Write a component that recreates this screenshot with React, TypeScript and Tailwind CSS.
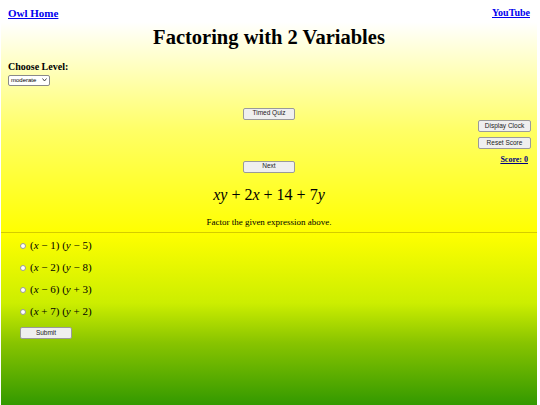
import React, { useState } from 'react';

const serif = { fontFamily: '"Liberation Serif", "Times New Roman", serif' };
const sans = { fontFamily: '"Liberation Sans", Arial, sans-serif' };

function MathVar({ children }: { children: React.ReactNode }) {
  return <span className="italic">{children}</span>;
}

function Factor({ a, b }: { a: string; b: string }) {
  return (
    <span style={serif} className="text-[11px] text-black">
      (<MathVar>x</MathVar> {a}) (<MathVar>y</MathVar> {b})
    </span>
  );
}

function SmallButton({ label, className = '' }: { label: string; className?: string }) {
  return (
    <button
      style={sans}
      className={`h-[12px] bg-[#efefef] border border-[#9a9a9a] rounded-[2px] text-[6.5px] leading-none text-[#222] ${className}`}
    >
      {label}
    </button>
  );
}

const choices = [
  { a: '− 1', b: '− 5' },
  { a: '− 2', b: '− 8' },
  { a: '− 6', b: '+ 3' },
  { a: '+ 7', b: '+ 2' },
];

export default function App() {
  const [picked, setPicked] = useState<number | null>(null);

  return (
    <div className="w-[540px] h-[405px] overflow-hidden bg-white pl-[1px] pr-[3px]" style={serif}>
      <div className="h-[405px] flex flex-col">
        {/* top section */}
        <div className="relative h-[233px] bg-[linear-gradient(to_bottom,#ffffff_0px,#ffffff_22px,#ffff66_130px,#ffff00_233px)]">
          <div className="flex justify-between px-[7px] pt-[8px]">
            <a href="#" className="text-[11px] font-bold text-[#0000ee] underline leading-none">
              Owl Home
            </a>
            <a href="#" className="text-[10px] font-bold text-[#0000ee] underline leading-none">
              YouTube
            </a>
          </div>
          <h1 className="text-center text-[20.5px] font-bold text-black leading-none mt-[8px]">
            Factoring with 2 Variables
          </h1>
          <div className="px-[7px] mt-[14px]">
            <div className="text-[10px] font-bold text-black leading-none">Choose Level:</div>
            <div
              style={sans}
              className="mt-[3px] w-[42px] h-[11px] bg-white border border-[#8a8a8a] rounded-[2px] flex items-center justify-between px-[2px] text-[6px] text-black"
            >
              <span>moderate</span>
              <svg width="5" height="4" viewBox="0 0 10 8">
                <path d="M1 1 L5 6 L9 1" stroke="#333" strokeWidth="1.8" fill="none" />
              </svg>
            </div>
          </div>
          <div className="flex justify-center mt-[22px]">
            <SmallButton label="Timed Quiz" className="w-[52px]" />
          </div>
          <div className="absolute right-[6px] top-[120px] flex flex-col items-end gap-[5px]">
            <SmallButton label="Display Clock" className="w-[53px]" />
            <SmallButton label="Reset Score" className="w-[53px]" />
            <a href="#" className="mt-[2px] mr-[3px] text-[8px] font-bold text-[#000080] underline leading-none">
              Score: 0
            </a>
          </div>
          <div className="flex justify-center mt-[41px]">
            <SmallButton label="Next" className="w-[52px]" />
          </div>
          <div className="text-center text-[16px] text-black leading-none mt-[14px]">
            <MathVar>xy</MathVar> + 2<MathVar>x</MathVar> + 14 + 7<MathVar>y</MathVar>
          </div>
          <p className="text-center text-[9px] text-black leading-none mt-[15px]">
            Factor the given expression above.
          </p>
          <div className="absolute left-0 right-0 bottom-0 h-[1px] bg-[#d4cc00]" />
        </div>

        {/* answers section */}
        <div className="flex-1 bg-[linear-gradient(to_bottom,#ffff00_0px,#ccee00_70px,#88c400_110px,#339900_172px)] px-[19px] pt-[6px]">
          <div className="flex flex-col gap-[9px]">
            {choices.map((c, i) => (
              <label key={i} className="flex items-center gap-[4px] h-[13px]">
                <span
                  onClick={() => setPicked(i)}
                  className={`w-[6px] h-[6px] rounded-full border border-[#999] ${picked === i ? 'bg-[#0060df]' : 'bg-white'}`}
                />
                <Factor a={c.a} b={c.b} />
              </label>
            ))}
          </div>
          <SmallButton label="Submit" className="w-[52px] mt-[8px]" />
        </div>
      </div>
    </div>
  );
}
